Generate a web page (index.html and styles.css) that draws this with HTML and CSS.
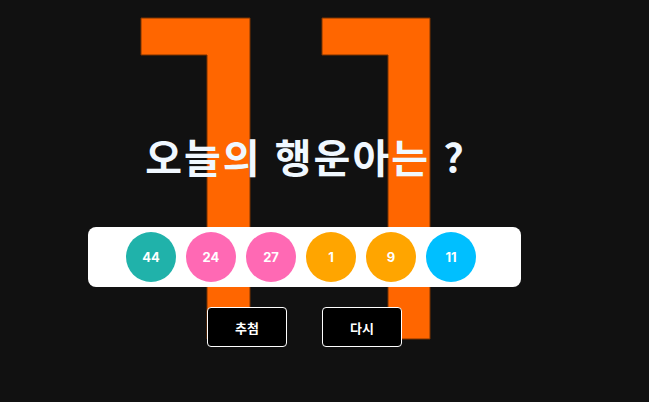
FILE: index.html
```html
<!DOCTYPE html>
<html lang="ko">
<head>
<meta charset="utf-8">
<title>오늘의 행운아는</title>
<link rel="stylesheet" href="styles.css">
</head>
<body>
<svg class="deco" width="649" height="402" viewBox="0 0 649 402" aria-hidden="true">
  <path d="M141 18H250V339H207V55H141Z"/>
  <path d="M322 18H430V339H388V55H322Z"/>
</svg>
<main class="stage">
  <h1 class="title">오늘의 행운아는 ?</h1>
  <div class="card">
    <span class="ball teal">44</span>
    <span class="ball pink">24</span>
    <span class="ball pink">27</span>
    <span class="ball orange">1</span>
    <span class="ball orange">9</span>
    <span class="ball blue">11</span>
  </div>
  <div class="actions">
    <button class="btn">추첨</button>
    <button class="btn">다시</button>
  </div>
</main>
</body>
</html>
```
FILE: styles.css
```css
html, body {
  margin: 0;
  padding: 0;
}
body {
  background: #111111;
  width: 649px;
  height: 402px;
  overflow: hidden;
  position: relative;
  font-family: "Noto Sans CJK KR", "Noto Sans", sans-serif;
}
.deco {
  position: absolute;
  left: 0;
  top: 0;
}
.deco path {
  fill: #ff6600;
  stroke: #7a3300;
  stroke-width: 1;
}
.stage {
  position: relative;
  width: 609px;
  display: flex;
  flex-direction: column;
  align-items: center;
  padding-top: 127px;
}
.title {
  margin: 0 0 0 2px;
  color: #f0f8ff;
  font-size: 40px;
  font-weight: 700;
  line-height: 58px;
  letter-spacing: 2px;
}
.card {
  margin-top: 42px;
  width: 433px;
  height: 60px;
  box-sizing: border-box;
  background: #ffffff;
  border-radius: 8px;
  display: flex;
  align-items: center;
  gap: 10px;
  padding-left: 38px;
}
.ball {
  width: 50px;
  height: 50px;
  border-radius: 50%;
  display: flex;
  align-items: center;
  justify-content: center;
  color: #ffffff;
  font-family: "Inter", "Noto Sans", sans-serif;
  font-weight: 700;
  font-size: 13px;
}
.teal { background: #20b2aa; }
.pink { background: #ff69b4; }
.orange { background: #ffa500; }
.blue { background: #00bfff; }
.actions {
  margin-top: 20px;
  display: flex;
  gap: 35px;
}
.btn {
  width: 80px;
  height: 40px;
  background: #000000;
  color: #ffffff;
  border: 1px solid #ffffff;
  border-radius: 4px;
  font-family: "Noto Sans CJK KR", sans-serif;
  font-weight: 700;
  font-size: 13px;
  padding: 0;
}
```
